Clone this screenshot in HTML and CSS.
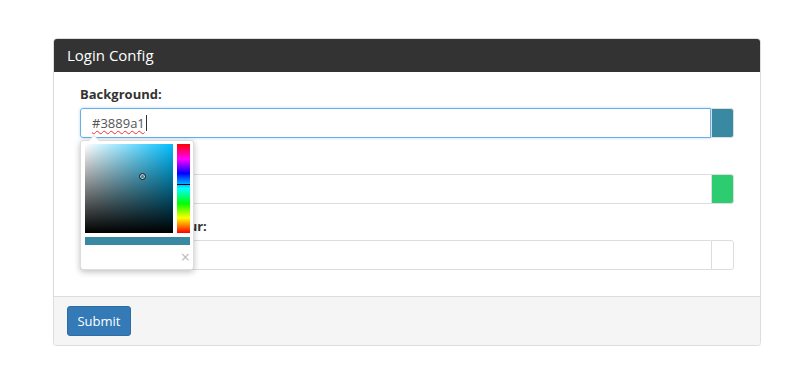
FILE: index.html
```html
<!DOCTYPE html>
<html lang="en">
<head>
    <meta charset="UTF-8">
    <title>Login Config</title>
    <link rel="stylesheet" href="styles.css">
</head>
<body>

<div class="panel">
    <div class="panel-heading">Login Config</div>
    <div class="panel-body">
        <div class="form-group">
            <label>Background:</label>
            <div class="input-group">
                <div class="form-control focused"><span class="typo">#3889a1</span><span class="caret"></span></div>
                <span class="addon" style="background: #3889a1;"></span>
            </div>
            <div class="picker">
                <div class="picker-top">
                    <div class="saturation">
                        <span class="sat-handle"></span>
                    </div>
                    <div class="hue">
                        <span class="hue-handle"></span>
                    </div>
                </div>
                <div class="preview"></div>
                <div class="picker-close">&times;</div>
            </div>
        </div>
        <div class="form-group">
            <label>Text Colour:</label>
            <div class="input-group">
                <div class="form-control"></div>
                <span class="addon" style="background: #2ecc71;"></span>
            </div>
        </div>
        <div class="form-group last">
            <label>Button Text Colour:</label>
            <div class="input-group">
                <div class="form-control"></div>
                <span class="addon"></span>
            </div>
        </div>
    </div>
    <div class="panel-footer">
        <button class="btn">Submit</button>
    </div>
</div>

</body>
</html>
```

FILE: styles.css
```css
body {
    font-family: "Open Sans", sans-serif;
    font-size: 13px;
    color: #333;
    margin: 0;
    padding: 38px 40px 0 53px;
}

.panel {
    border: 1px solid #ddd;
    border-radius: 4px;
    background: #fff;
    box-shadow: 0 1px 1px rgba(0, 0, 0, 0.05);
}

.panel-heading {
    background: #333;
    color: #fff;
    font-size: 15px;
    height: 33px;
    line-height: 33px;
    padding: 0 13px;
    border-radius: 3px 3px 0 0;
}

.panel-body {
    padding: 13px 26px 26px;
}

.form-group {
    position: relative;
    margin-bottom: 13px;
}

.form-group.last {
    margin-bottom: 0;
}

label {
    display: block;
    font-weight: bold;
    line-height: 18px;
    margin-bottom: 5px;
}

.input-group {
    display: flex;
    height: 30px;
}

.form-control {
    flex: 1;
    box-sizing: border-box;
    height: 30px;
    border: 1px solid #ddd;
    border-right: none;
    border-radius: 3px 0 0 3px;
    padding: 0 11px;
    line-height: 28px;
    color: #555;
    font-size: 13px;
}

.form-control.focused {
    border: 1px solid #66afe9;
    box-shadow: 0 0 3px rgba(102, 175, 233, 0.5);
}

.typo {
    text-decoration: underline wavy #e33;
    text-decoration-thickness: 1px;
    text-underline-offset: 2px;
}

.caret {
    display: inline-block;
    width: 1px;
    height: 16px;
    background: #333;
    vertical-align: -3px;
    margin-left: 1px;
}

.addon {
    width: 23px;
    box-sizing: border-box;
    border: 1px solid #ddd;
    border-radius: 0 3px 3px 0;
}

.picker {
    position: absolute;
    left: 0;
    top: 55px;
    width: 114px;
    height: 130px;
    box-sizing: border-box;
    padding: 3px 3px 3px 4px;
    background: #fff;
    border: 1px solid #ddd;
    border-radius: 3px;
    box-shadow: 0 2px 6px rgba(0, 0, 0, 0.25);
    z-index: 2;
}

.picker::before {
    content: "";
    position: absolute;
    top: -6px;
    left: 7px;
    border: 6px solid transparent;
    border-top: none;
    border-bottom-color: #ddd;
}

.picker::after {
    content: "";
    position: absolute;
    top: -5px;
    left: 8px;
    border: 5px solid transparent;
    border-top: none;
    border-bottom-color: #fff;
}

.picker-top {
    display: flex;
    gap: 4px;
}

.saturation {
    position: relative;
    width: 88px;
    height: 89px;
    background:
        linear-gradient(to bottom, rgba(0, 0, 0, 0), #000),
        linear-gradient(to right, #fff, rgba(255, 255, 255, 0)),
        #00bfff;
}

.sat-handle {
    position: absolute;
    left: 54px;
    top: 29px;
    width: 5px;
    height: 5px;
    border: 1px solid #222;
    border-radius: 50%;
    box-shadow: inset 0 0 0 1px #ccc;
}

.hue {
    position: relative;
    width: 13px;
    height: 89px;
    background: linear-gradient(to bottom, #f00 0%, #f0f 17%, #00f 33%, #0ff 50%, #0f0 67%, #ff0 83%, #f00 100%);
}

.hue-handle {
    position: absolute;
    left: 0;
    right: 0;
    top: 40px;
    height: 1px;
    background: #000;
}

.preview {
    margin-top: 4px;
    height: 8px;
    background: #3889a1;
}

.picker-close {
    text-align: right;
    color: #bbb;
    font-size: 16px;
    line-height: 16px;
    margin-top: 4px;
}

.panel-footer {
    background: #f5f5f5;
    border-top: 1px solid #ddd;
    padding: 9px 13px;
    border-radius: 0 0 3px 3px;
}

.btn {
    font-family: "Open Sans", sans-serif;
    font-size: 13px;
    color: #fff;
    background: #337ab7;
    border: 1px solid #2e6da4;
    border-radius: 3px;
    width: 64px;
    height: 30px;
    padding: 0;
}
```
